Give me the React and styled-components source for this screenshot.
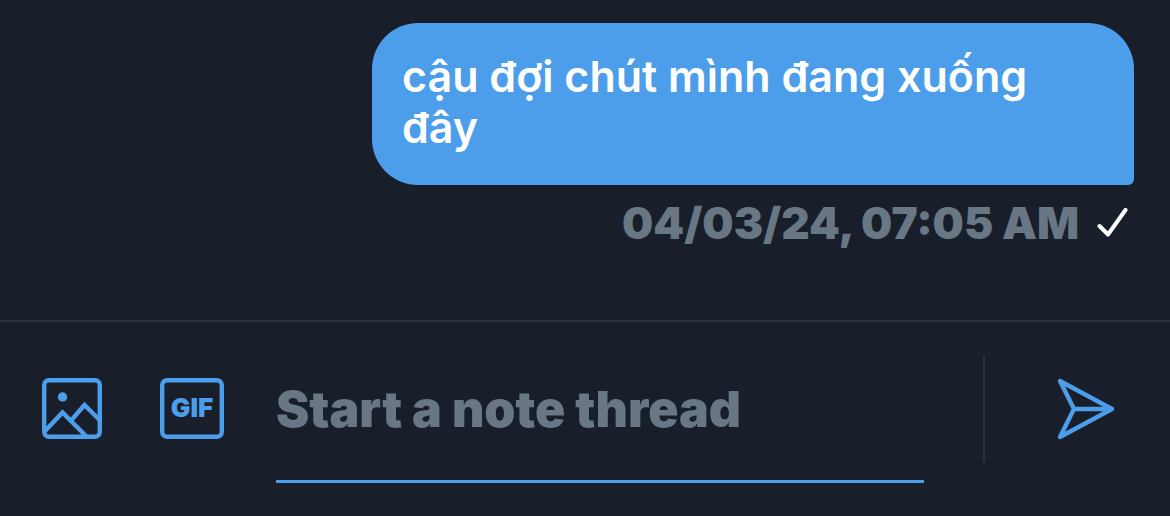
import { useState } from 'react';
import styled, { createGlobalStyle } from 'styled-components';

const GlobalStyle = createGlobalStyle`
    * {
        box-sizing: border-box;
    }
    body {
        margin: 0;
        background-color: #181f2a;
        font-family: Inter, "Noto Sans", sans-serif;
    }
`

const Wrapper = styled.main`
    min-height: 100vh;
    display: flex;
    flex-direction: column;
`

const Thread = styled.section`
    flex: 1;
    display: flex;
    flex-direction: column;
    align-items: flex-end;
    padding: 23px 36px 71px;
`

const Bubble = styled.p`
    margin: 0;
    max-width: 762px;
    padding: 28px 30px 32px;
    border-radius: 46px 46px 6px 46px;
    background-color: #4c9eeb;
    color: #fff;
    font-size: 43px;
    font-weight: 600;
    line-height: 51px;
`

const Meta = styled.div`
    display: flex;
    align-items: center;
    gap: 18px;
    margin-top: 12px;
    padding-right: 6px;
    color: #697784;
    font-size: 44px;
    font-weight: 900;
    line-height: 52px;
`

const Composer = styled.form`
    display: flex;
    align-items: center;
    padding: 33px 55px 33px 42px;
    border-top: 2px solid #2a313b;
`

const Tools = styled.div`
    display: flex;
    gap: 58px;
    margin-right: 52px;
    padding-bottom: 21px;
`

const IconButton = styled.button`
    display: flex;
    padding: 0;
    border: none;
    background: none;
    color: #4c9eeb;
    font-family: inherit;
    cursor: pointer;
`

const NoteInput = styled.input`
    flex: 1;
    min-width: 0;
    height: 128px;
    padding: 0 0 18px;
    border: none;
    border-bottom: 3px solid #4c9eeb;
    outline: none;
    background: none;
    color: #fff;
    font-family: inherit;
    font-size: 50px;
    font-weight: 900;
    &::placeholder {
        color: #697784;
        opacity: 1;
    }
`

const SendArea = styled.div`
    display: flex;
    align-items: center;
    height: 107px;
    margin: 0 0 21px 59px;
    padding-left: 72px;
    border-left: 2px solid #2a313b;
`

const ImageIcon = () => (
    <svg width="60" height="61" viewBox="0 0 60 61" fill="none" stroke="currentColor" strokeWidth="4.4">
        <rect x="2.2" y="2.2" width="55.6" height="56.6" rx="5" />
        <path d="M3 53 L20.5 34.5 L44 58" />
        <path d="M29.5 42 L42.5 27 L58 42.5" />
        <circle cx="20.5" cy="19" r="4.7" fill="currentColor" stroke="none" />
    </svg>
)

const GifIcon = () => (
    <svg width="64" height="61" viewBox="0 0 64 61" fill="none">
        <rect x="2.2" y="2.2" width="59.6" height="56.6" rx="5" stroke="currentColor" strokeWidth="4.4" />
        <text x="32" y="39" textAnchor="middle" fontSize="26" fontWeight="900" fill="currentColor">GIF</text>
    </svg>
)

const SendIcon = () => (
    <svg width="58" height="62" viewBox="0 0 58 62" fill="none" stroke="currentColor" strokeWidth="4.4" strokeLinejoin="round" strokeLinecap="round">
        <path d="M3 3 L55 31 L3 59 L17 31 Z" />
        <path d="M17 31 H54" />
    </svg>
)

const CheckIcon = () => (
    <svg width="31" height="30" viewBox="0 0 31 30" fill="none" stroke="#fff" strokeWidth="4" strokeLinejoin="round" strokeLinecap="round">
        <path d="M2.5 18 L11 26.5 L28.5 2" />
    </svg>
)

function App() {
    const [note, setNote] = useState('')

    return <Wrapper>
        <GlobalStyle />
        <Thread>
            <Bubble>cậu đợi chút mình đang xuống đây</Bubble>
            <Meta>
                <time>04/03/24, 07:05 AM</time>
                <CheckIcon />
            </Meta>
        </Thread>
        <Composer>
            <Tools>
                <IconButton type="button" aria-label="Add image"><ImageIcon /></IconButton>
                <IconButton type="button" aria-label="Add GIF"><GifIcon /></IconButton>
            </Tools>
            <NoteInput
                aria-label="Note"
                placeholder="Start a note thread"
                value={note}
                onChange={(e) => setNote(e.target.value)}
            />
            <SendArea>
                <IconButton type="button" aria-label="Send"><SendIcon /></IconButton>
            </SendArea>
        </Composer>
    </Wrapper>
}
export default App
